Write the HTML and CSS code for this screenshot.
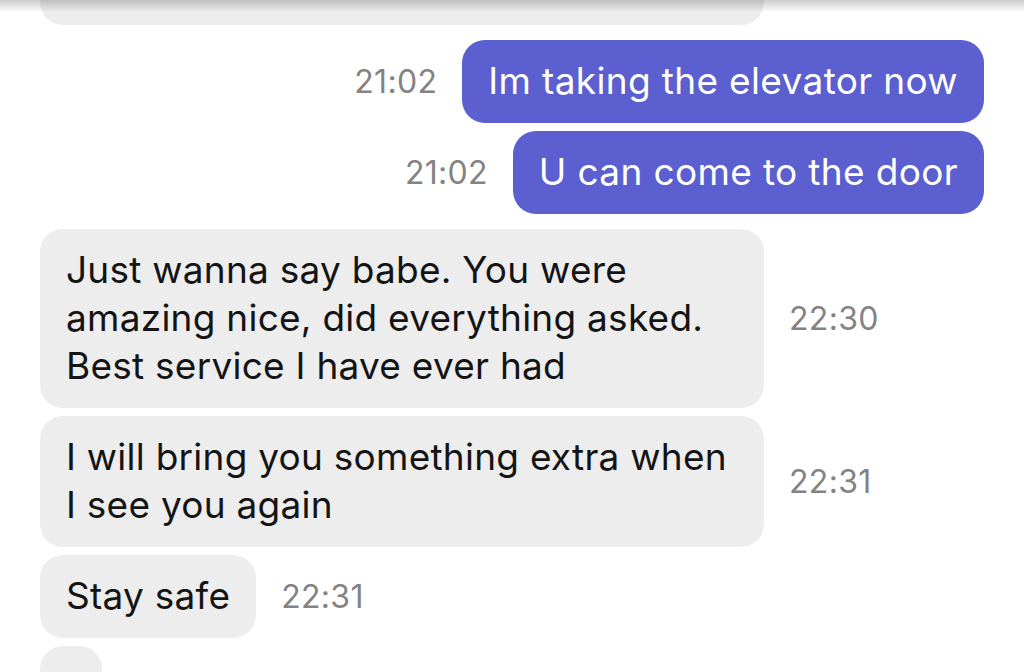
FILE: index.html
```html
<!DOCTYPE html>
<html lang="en">
<head>
<meta charset="utf-8">
<title>Chat</title>
<link rel="stylesheet" href="styles.css">
</head>
<body>
<div class="top-shadow"></div>
<main class="chat">
  <div class="row in">
    <div class="bubble in partial"></div>
  </div>

  <div class="row out group">
    <span class="time">21:02</span>
    <div class="bubble out">Im taking the elevator now</div>
  </div>
  <div class="row out">
    <span class="time">21:02</span>
    <div class="bubble out">U can come to the door</div>
  </div>

  <div class="row in group">
    <div class="bubble in">Just wanna say babe. You were amazing nice, did everything asked. Best service I have ever had</div>
    <span class="time">22:30</span>
  </div>
  <div class="row in">
    <div class="bubble in">I will bring you something extra when I see you again</div>
    <span class="time">22:31</span>
  </div>
  <div class="row in">
    <div class="bubble in">Stay safe</div>
    <span class="time">22:31</span>
  </div>
  <div class="row in last">
    <div class="bubble in">I</div>
    <span class="time">22:31</span>
  </div>
</main>
</body>
</html>
```

FILE: styles.css
```css
html, body {
  margin: 0;
  padding: 0;
  background: #ffffff;
}

body {
  width: 1024px;
  height: 672px;
  overflow: hidden;
  position: relative;
  font-family: Inter, "Noto Sans", Arial, sans-serif;
}

.top-shadow {
  position: absolute;
  top: 0;
  left: 0;
  right: 0;
  height: 12px;
  background: linear-gradient(to bottom, rgba(0, 0, 0, 0.2), rgba(0, 0, 0, 0));
  z-index: 2;
}

.chat {
  display: flex;
  flex-direction: column;
  gap: 8px;
  padding: 0 40px;
}

.row {
  display: flex;
  align-items: center;
  gap: 25px;
}

.row.out {
  justify-content: flex-end;
}

.row.group {
  margin-top: 7px;
}

.bubble {
  font-size: 37px;
  line-height: 48px;
  padding: 17px 26px 18px;
  border-radius: 23px;
  box-sizing: border-box;
  max-width: 724px;
}

.bubble.in {
  background: #ededed;
  color: #141414;
  letter-spacing: 0.25px;
}

.bubble.out {
  background: #5b5fd0;
  color: #ffffff;
  letter-spacing: 0.35px;
}

.bubble.partial {
  width: 725px;
  height: 60px;
  margin-top: -35px;
}

.time {
  font-size: 32px;
  letter-spacing: 0.3px;
  color: #838383;
  white-space: nowrap;
}
```
